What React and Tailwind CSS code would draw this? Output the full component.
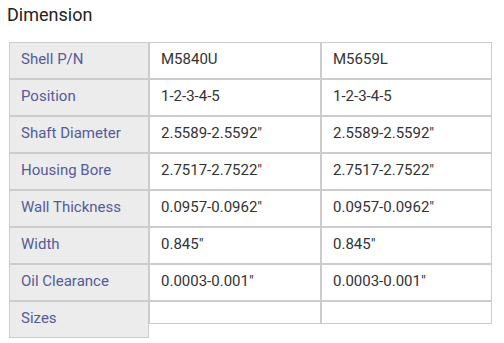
const rows = [
  ["Shell P/N", "M5840U", "M5659L"],
  ["Position", "1-2-3-4-5", "1-2-3-4-5"],
  ["Shaft Diameter", "2.5589-2.5592\"", "2.5589-2.5592\""],
  ["Housing Bore", "2.7517-2.7522\"", "2.7517-2.7522\""],
  ["Wall Thickness", "0.0957-0.0962\"", "0.0957-0.0962\""],
  ["Width", "0.845\"", "0.845\""],
  ["Oil Clearance", "0.0003-0.001\"", "0.0003-0.001\""],
];

export default function App() {
  return (
    <div className="w-[504px] h-[343px] bg-white font-['Roboto',sans-serif] overflow-hidden">
      <h2 className="pl-[7px] pt-[3px] text-[18px] leading-[24px] text-[#222]">Dimension</h2>
      <div className="pl-[9px] pt-[15px] text-[15px] text-[#333]">
        {rows.map((r) => (
          <div key={r[0]} className="flex">
            <div className="w-[140px] h-[37px] flex items-center pl-[11px] pb-[2px] bg-[#ececec] border border-[#ccc] text-[#555b98]">
              {r[0]}
            </div>
            <div className="w-[172px] h-[37px] flex items-center pl-[11px] pb-[2px] border border-[#ccc]">
              {r[1]}
            </div>
            <div className="w-[171px] h-[37px] flex items-center pl-[11px] pb-[2px] border border-[#ccc]">
              {r[2]}
            </div>
          </div>
        ))}
        <div className="flex items-start">
          <div className="w-[140px] h-[37px] flex items-center pl-[11px] pb-[2px] bg-[#ececec] border border-[#ccc] text-[#555b98]">
            Sizes
          </div>
          <div className="w-[172px] h-[23px] border border-[#ccc]"></div>
          <div className="w-[171px] h-[23px] border border-[#ccc]"></div>
        </div>
      </div>
    </div>
  );
}
